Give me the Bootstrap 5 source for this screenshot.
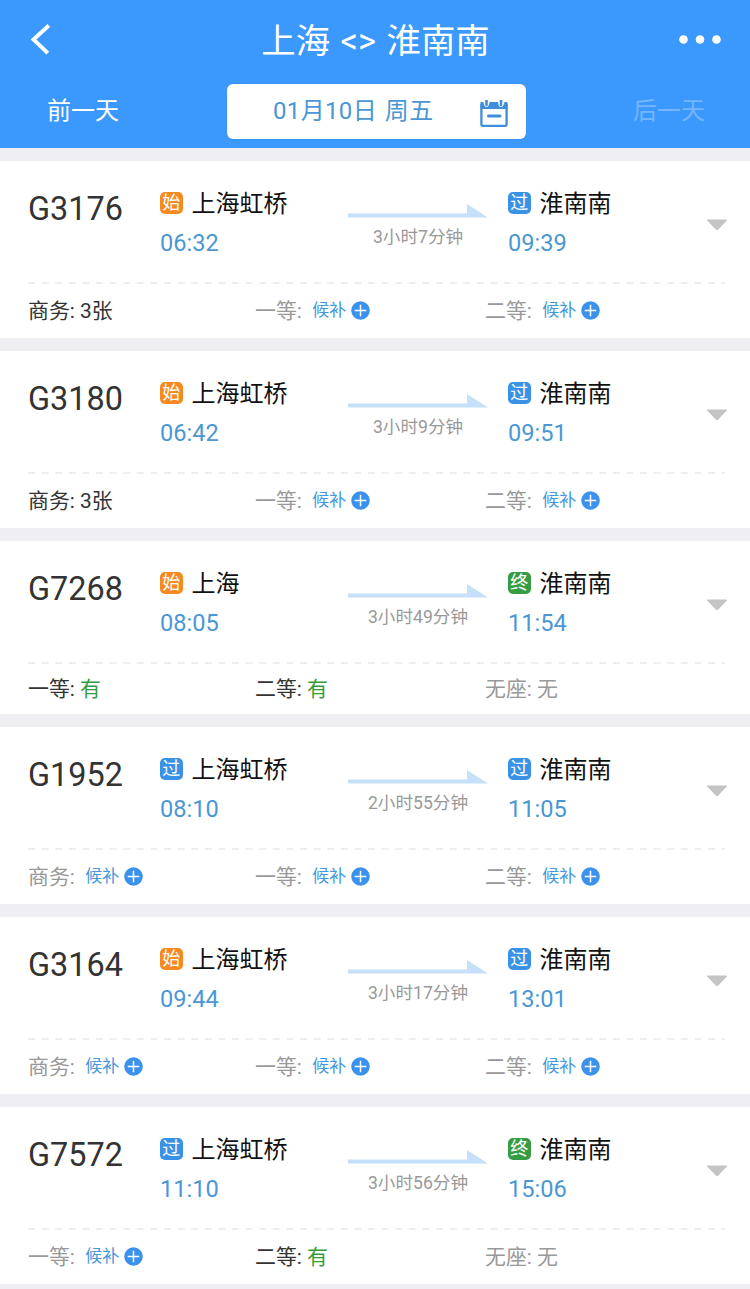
<!DOCTYPE html>
<html lang="zh-CN">
<head>
<meta charset="utf-8">
<meta name="viewport" content="width=device-width, initial-scale=1">
<title>上海 &lt;&gt; 淮南南</title>
<link href="https://cdn.jsdelivr.net/npm/bootstrap@5.3.0/dist/css/bootstrap.min.css" rel="stylesheet">
<style>
body{font-family:Roboto,"Noto Sans CJK SC",sans-serif;background:#eeeef3;color:#333;overflow:hidden;height:1289px;font-size:24px;font-weight:400}
svg{display:block;flex:none}
.topbar{background:#3b98fc;height:148px;color:#fff}
.title-row{height:80px;padding:0 29px 0 30px}
.title-row h1{font-size:34.4px;line-height:40px;font-weight:400;padding-top:2px;word-spacing:2px}
.date-row{height:68px;padding:4px 44px 0 47px}
.day-link{width:73px;line-height:55px;height:55px;color:#fff;white-space:nowrap}
.day-off{color:#74b6fd}
.date-box{width:299px;height:55px;border-radius:6px;color:#4a97d4;padding:0 18px 0 46px;line-height:55px;box-shadow:0 0 1px #3579c8}
.date-box span{letter-spacing:.35px;word-spacing:1.5px}
.trains{padding-top:13px;gap:13px}
.train{border:0;border-radius:0;height:177px;padding:0 22px 0 28px;color:#333}
.train.compact{height:173px}
.trip{height:121px;flex:none}
.number{width:132px;padding-top:28px;font-size:32.4px;line-height:40px}
.from{width:188px;padding-top:27px}
.to{width:198px;padding-top:27px}
.station{height:32px;color:#111;line-height:33px;gap:9px;white-space:nowrap}
.mark-box{width:22.5px;height:22.5px;border-radius:5px;color:#fff;font-size:18px;line-height:21px;text-align:center;margin-top:-2px;flex:none}
.start{background:#f58a22}.pass{background:#3992e6}.end{background:#369c43}
.clock{color:#4a97d4;font-size:23.6px;line-height:28px;padding-top:8.5px}
.span-box{width:140px;margin-right:20px;padding-top:42px;color:#999;font-size:17.6px;line-height:24px;white-space:nowrap}
.span-box svg{margin-bottom:7px}
.caret{margin:58px 0 0 0}
.seats{height:54px;line-height:55px;font-size:20.9px;flex:none}
.compact .seats{height:50px;line-height:51px}
.seat-a{width:227px}.seat-b{width:230px}
.off{color:#999}.has{color:#379b3e}
.wait{font-size:17px;color:#4397dc;margin:0 5px 0 10.5px;position:relative;top:-1px}
.seats svg{margin-top:-1px}
</style>
</head>
<body>
<svg width="0" height="0" class="position-absolute" aria-hidden="true">
<symbol id="arrow" viewBox="0 0 140 15"><path d="M0 10.500H119V1L140 14.500H0Z" fill="#c5e0f8"/></symbol>
<symbol id="caret" viewBox="0 0 22 12"><path d="M1.500.5H20.500Q21.500.8 20.800 1.600L12 10.800Q11 11.700 10 10.800L1.200 1.600Q.5.8 1.500.5Z" fill="#c4c4c4"/></symbol>
<symbol id="plus" viewBox="0 0 19 19"><circle cx="9.500" cy="9.500" r="9.300" fill="#3b92ec"/><path d="M9.500 3.700V15.300M3.700 9.500H15.300" stroke="#fff" stroke-width="1.500"/></symbol>
<symbol id="dash" viewBox="0 0 697 2"><path d="M0 1H697" stroke="#e9e9e9" stroke-width="1.500" stroke-dasharray="7 6.600"/></symbol>
</svg>
<header class="topbar">
  <div class="title-row d-flex align-items-center justify-content-between">
    <svg width="42" height="32" viewBox="0 0 42 32"><path d="M18.800 2.500L3.500 16.500L17.800 30.200" transform="translate(0 -1)" fill="none" stroke="#fff" stroke-width="3.900"/></svg>
    <h1 class="m-0">上海 &lt;&gt; 淮南南</h1>
    <svg width="42" height="10" viewBox="0 0 42 10"><g fill="#fff"><circle cx="4.500" cy="4.500" r="4.300"/><circle cx="21" cy="4.500" r="4.300"/><circle cx="37.500" cy="4.500" r="4.300"/></g></svg>
  </div>
  <div class="date-row d-flex justify-content-between">
    <div class="day-link">前一天</div>
    <div class="date-box bg-white d-flex justify-content-between align-items-start">
      <span>01月10日 周五</span>
      <svg class="mt-3" width="28" height="29" viewBox="0 1 28 29"><path d="M1.400 5V25.300Q1.400 26.800 2.900 26.800H25.100Q26.600 26.800 26.600 25.300V5" fill="none" stroke="#3f8edb" stroke-width="2.300"/><path d="M.5 3H3.500Q4 8 6.500 8T9.500 3H18Q18.500 8 21 8T24.500 3H27.500V10H.5Z" fill="#3f8edb"/><path d="M6.500 1V6M21 1V6" stroke="#3f8edb" stroke-width="2.600" stroke-linecap="round"/><path d="M8.500 17H20" stroke="#3f8edb" stroke-width="3" stroke-linecap="round"/></svg>
    </div>
    <div class="day-link day-off">后一天</div>
  </div>
</header>
<main class="trains d-flex flex-column">
  <article class="train card">
    <div class="trip d-flex align-items-start">
      <div class="number">G3176</div>
      <div class="from"><div class="station d-flex align-items-center"><span class="mark-box start">始</span>上海虹桥</div><div class="clock">06:32</div></div>
      <div class="span-box text-center"><svg width="140" height="15"><use href="#arrow"/></svg>3小时7分钟</div>
      <div class="to"><div class="station d-flex align-items-center"><span class="mark-box pass">过</span>淮南南</div><div class="clock">09:39</div></div>
      <svg class="caret" width="22" height="12"><use href="#caret"/></svg>
    </div>
    <svg width="697" height="2" class="dash-line"><use href="#dash"/></svg>
    <div class="seats d-flex">
      <div class="seat-a">商务: 3张</div>
      <div class="seat-b d-flex align-items-center off">一等:<span class="wait">候补</span><svg width="19" height="19"><use href="#plus"/></svg></div>
      <div class="d-flex align-items-center off">二等:<span class="wait">候补</span><svg width="19" height="19"><use href="#plus"/></svg></div>
    </div>
  </article>
  <article class="train card">
    <div class="trip d-flex align-items-start">
      <div class="number">G3180</div>
      <div class="from"><div class="station d-flex align-items-center"><span class="mark-box start">始</span>上海虹桥</div><div class="clock">06:42</div></div>
      <div class="span-box text-center"><svg width="140" height="15"><use href="#arrow"/></svg>3小时9分钟</div>
      <div class="to"><div class="station d-flex align-items-center"><span class="mark-box pass">过</span>淮南南</div><div class="clock">09:51</div></div>
      <svg class="caret" width="22" height="12"><use href="#caret"/></svg>
    </div>
    <svg width="697" height="2" class="dash-line"><use href="#dash"/></svg>
    <div class="seats d-flex">
      <div class="seat-a">商务: 3张</div>
      <div class="seat-b d-flex align-items-center off">一等:<span class="wait">候补</span><svg width="19" height="19"><use href="#plus"/></svg></div>
      <div class="d-flex align-items-center off">二等:<span class="wait">候补</span><svg width="19" height="19"><use href="#plus"/></svg></div>
    </div>
  </article>
  <article class="train card compact">
    <div class="trip d-flex align-items-start">
      <div class="number">G7268</div>
      <div class="from"><div class="station d-flex align-items-center"><span class="mark-box start">始</span>上海</div><div class="clock">08:05</div></div>
      <div class="span-box text-center"><svg width="140" height="15"><use href="#arrow"/></svg>3小时49分钟</div>
      <div class="to"><div class="station d-flex align-items-center"><span class="mark-box end">终</span>淮南南</div><div class="clock">11:54</div></div>
      <svg class="caret" width="22" height="12"><use href="#caret"/></svg>
    </div>
    <svg width="697" height="2" class="dash-line"><use href="#dash"/></svg>
    <div class="seats d-flex">
      <div class="seat-a">一等: <span class="has">有</span></div>
      <div class="seat-b">二等: <span class="has">有</span></div>
      <div class="off">无座: 无</div>
    </div>
  </article>
  <article class="train card">
    <div class="trip d-flex align-items-start">
      <div class="number">G1952</div>
      <div class="from"><div class="station d-flex align-items-center"><span class="mark-box pass">过</span>上海虹桥</div><div class="clock">08:10</div></div>
      <div class="span-box text-center"><svg width="140" height="15"><use href="#arrow"/></svg>2小时55分钟</div>
      <div class="to"><div class="station d-flex align-items-center"><span class="mark-box pass">过</span>淮南南</div><div class="clock">11:05</div></div>
      <svg class="caret" width="22" height="12"><use href="#caret"/></svg>
    </div>
    <svg width="697" height="2" class="dash-line"><use href="#dash"/></svg>
    <div class="seats d-flex">
      <div class="seat-a d-flex align-items-center off">商务:<span class="wait">候补</span><svg width="19" height="19"><use href="#plus"/></svg></div>
      <div class="seat-b d-flex align-items-center off">一等:<span class="wait">候补</span><svg width="19" height="19"><use href="#plus"/></svg></div>
      <div class="d-flex align-items-center off">二等:<span class="wait">候补</span><svg width="19" height="19"><use href="#plus"/></svg></div>
    </div>
  </article>
  <article class="train card">
    <div class="trip d-flex align-items-start">
      <div class="number">G3164</div>
      <div class="from"><div class="station d-flex align-items-center"><span class="mark-box start">始</span>上海虹桥</div><div class="clock">09:44</div></div>
      <div class="span-box text-center"><svg width="140" height="15"><use href="#arrow"/></svg>3小时17分钟</div>
      <div class="to"><div class="station d-flex align-items-center"><span class="mark-box pass">过</span>淮南南</div><div class="clock">13:01</div></div>
      <svg class="caret" width="22" height="12"><use href="#caret"/></svg>
    </div>
    <svg width="697" height="2" class="dash-line"><use href="#dash"/></svg>
    <div class="seats d-flex">
      <div class="seat-a d-flex align-items-center off">商务:<span class="wait">候补</span><svg width="19" height="19"><use href="#plus"/></svg></div>
      <div class="seat-b d-flex align-items-center off">一等:<span class="wait">候补</span><svg width="19" height="19"><use href="#plus"/></svg></div>
      <div class="d-flex align-items-center off">二等:<span class="wait">候补</span><svg width="19" height="19"><use href="#plus"/></svg></div>
    </div>
  </article>
  <article class="train card">
    <div class="trip d-flex align-items-start">
      <div class="number">G7572</div>
      <div class="from"><div class="station d-flex align-items-center"><span class="mark-box pass">过</span>上海虹桥</div><div class="clock">11:10</div></div>
      <div class="span-box text-center"><svg width="140" height="15"><use href="#arrow"/></svg>3小时56分钟</div>
      <div class="to"><div class="station d-flex align-items-center"><span class="mark-box end">终</span>淮南南</div><div class="clock">15:06</div></div>
      <svg class="caret" width="22" height="12"><use href="#caret"/></svg>
    </div>
    <svg width="697" height="2" class="dash-line"><use href="#dash"/></svg>
    <div class="seats d-flex">
      <div class="seat-a d-flex align-items-center off">一等:<span class="wait">候补</span><svg width="19" height="19"><use href="#plus"/></svg></div>
      <div class="seat-b">二等: <span class="has">有</span></div>
      <div class="off">无座: 无</div>
    </div>
  </article>
</main>
<script src="https://cdn.jsdelivr.net/npm/bootstrap@5.3.0/dist/js/bootstrap.bundle.min.js"></script>
</body>
</html>
